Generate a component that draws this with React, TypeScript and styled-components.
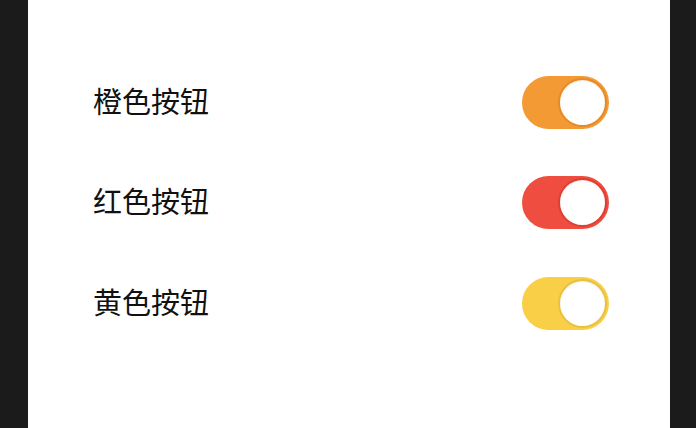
import React, { useState } from "react"
import styled, { createGlobalStyle } from "styled-components"

const GlobalStyle = createGlobalStyle`
  html, body {
    margin: 0;
    padding: 0;
    background: #1b1b1b;
  }
  body {
    font-family: "Noto Sans CJK SC", "Noto Sans", sans-serif;
  }
`

const Page = styled.div`
  display: flex;
  min-height: 100vh;
  padding: 0 26px 0 28px;
  box-sizing: border-box;
`

const Panel = styled.main`
  flex: 1;
  background: #ffffff;
  padding: 52px 61px 0 65px;
  display: flex;
  flex-direction: column;
`

const Row = styled.div`
  height: 100.5px;
  display: flex;
  align-items: center;
  justify-content: space-between;
`

const Label = styled.span`
  font-size: 29px;
  line-height: 1;
  color: #111111;
  padding-bottom: 4px;
`

const Track = styled.button<{ $color: string; $on: boolean }>`
  width: 87px;
  height: 53px;
  border-radius: 27px;
  border: none;
  padding: 2px;
  box-sizing: border-box;
  cursor: pointer;
  display: flex;
  align-items: center;
  justify-content: ${p => (p.$on ? "flex-end" : "flex-start")};
  background: ${p => (p.$on ? p.$color : "#e5e5e5")};
`

const Knob = styled.span<{ $color: string }>`
  width: 49px;
  height: 49px;
  border-radius: 50%;
  background: #ffffff;
  box-sizing: border-box;
  border: 2px solid ${p => p.$color};
  box-shadow: inset 0 1px 2px rgba(0, 0, 0, 0.08);
`

const items = [
  { label: "橙色按钮", color: "#f39a34", edge: "#e58a26" },
  { label: "红色按钮", color: "#ee4d3f", edge: "#dd3f32" },
  { label: "黄色按钮", color: "#f8cf47", edge: "#ecc03a" },
]

const App: React.FC = () => {
  const [state, setState] = useState<boolean[]>([true, true, true])

  const flip = (i: number) =>
    setState(prev => prev.map((v, j) => (j === i ? !v : v)))

  return (
    <>
      <GlobalStyle />
      <Page>
        <Panel>
          {items.map((item, i) => (
            <Row key={item.label}>
              <Label>{item.label}</Label>
              <Track
                $color={item.color}
                $on={state[i]}
                onClick={() => flip(i)}
              >
                <Knob $color={item.edge} />
              </Track>
            </Row>
          ))}
        </Panel>
      </Page>
    </>
  )
}

export default App
